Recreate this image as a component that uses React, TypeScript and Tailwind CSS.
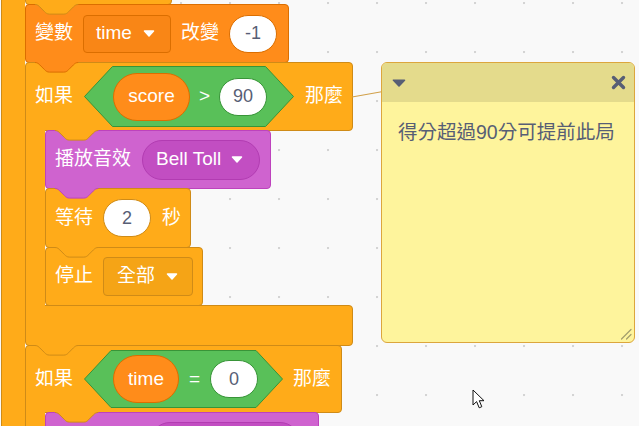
import React from 'react';

const FONT = "font-['Liberation_Sans','Noto_Sans_CJK_TC',sans-serif]";

function Bump({ fill, stroke, pos }: { fill: string; stroke: string; pos: string }) {
  return (
    <svg className={`absolute top-full z-10 ${pos}`} width="45" height="12" viewBox="0 0 45 12">
      <path
        d="M0 0 H43.2 V0.5 c-2.4 0 -3.6 1.2 -4.8 2.4 l-4.8 4.8 c-1.2 1.2 -2.4 2.4 -4.8 2.4 h-14.4 c-2.4 0 -3.6 -1.2 -4.8 -2.4 l-4.8 -4.8 C3.6 1.7 2.4 0.5 0 0.5 Z"
        fill={fill}
      />
      <path
        d="M0 0.5 c2.4 0 3.6 1.2 4.8 2.4 l4.8 4.8 c1.2 1.2 2.4 2.4 4.8 2.4 h14.4 c2.4 0 3.6 -1.2 4.8 -2.4 l4.8 -4.8 c1.2 -1.2 2.4 -2.4 4.8 -2.4"
        fill="none"
        stroke={stroke}
      />
    </svg>
  );
}

function Caret({ color = '#ffffff' }: { color?: string }) {
  return (
    <svg width="12" height="7" viewBox="0 0 12 7">
      <path d="M1.5 1 H10.5 L6 6 Z" fill={color} stroke={color} strokeWidth="1.5" strokeLinejoin="round" />
    </svg>
  );
}

function Hex({ w, h, size, inner, children }: { w: number; h: number; size: string; inner: string; children: React.ReactNode }) {
  const p = h / 2 - 2;
  const pts = `0.5,${h / 2} ${p},0.5 ${w - p},0.5 ${w - 0.5},${h / 2} ${w - p},${h - 0.5} ${p},${h - 0.5}`;
  return (
    <div className={`relative shrink-0 ${size}`}>
      <svg className="absolute inset-0" width={w} height={h}>
        <polygon points={pts} fill="#59c059" stroke="#389438" />
      </svg>
      <div className={`relative flex h-full items-center ${inner}`}>{children}</div>
    </div>
  );
}

function Oval({ value, border }: { value: string; border: string }) {
  return (
    <div className={`flex h-[38px] w-[48px] shrink-0 items-center justify-center rounded-full border bg-white text-[18px] text-[#575e75] ${border}`}>
      {value}
    </div>
  );
}

export default function App() {
  return (
    <div
      className={`relative h-[426px] w-[639px] overflow-hidden whitespace-nowrap bg-[#f9f9f9] bg-[radial-gradient(circle_at_1px_1px,#d4d4d4_1px,transparent_1.6px)] bg-[length:49px_49px] bg-[position:33px_2px] text-[19px] text-white ${FONT}`}
    >
      <div className="flex h-full items-start pl-px">
        {/* outer C arm */}
        <div className="h-full w-[24px] shrink-0 border-l border-[#cf8b17] bg-[#ffab19]" />

        <div className="flex shrink-0 flex-col">
          {/* block above, only its bottom shows */}
          <div className="relative -mt-[55px] h-[60px] w-[147px] shrink-0 rounded-[4px] border border-[#cf8b17] bg-[#ffab19]">
            <Bump fill="#ffab19" stroke="#cf8b17" pos="left-[9px]" />
          </div>

          {/* change variable */}
          <div className="relative -mt-px flex h-[59px] w-[264px] shrink-0 items-center gap-[10px] rounded-[4px] border border-[#db6e00] bg-[#ff8c1a] pl-[9px]">
            <span>變數</span>
            <div className="flex h-[38px] w-[88px] items-center gap-[11px] rounded-[4px] border border-[#db6e00] bg-[#f98616] pl-[12px]">
              <span>time</span>
              <Caret />
            </div>
            <span>改變</span>
            <Oval value="-1" border="border-[#db6e00]" />
            <Bump fill="#ff8c1a" stroke="#db6e00" pos="left-[9px]" />
          </div>

          {/* if score > 90 */}
          <div className="-mt-px flex shrink-0 flex-col">
            <div className="relative flex h-[69px] w-[328px] items-center gap-[11px] rounded-[4px] rounded-bl-none border border-[#cf8b17] bg-[#ffab19] pl-[9px]">
              <span>如果</span>
              <Hex w={210} h={61} size="h-[61px] w-[210px]" inner="gap-[9px] pl-[29px]">
                <div className="flex h-[48px] w-[77px] items-center justify-center rounded-full border border-[#db6e00] bg-[#ff8c1a]">
                  score
                </div>
                <span className="w-[11px] text-center">&gt;</span>
                <Oval value="90" border="border-[#389438]" />
              </Hex>
              <span>那麼</span>
              <Bump fill="#ffab19" stroke="#cf8b17" pos="left-[29px]" />
            </div>

            <div className="-mt-px flex">
              <div className="relative z-[1] -mb-px w-[20px] shrink-0 border-l border-[#cf8b17] bg-[#ffab19]" />
              <div className="flex flex-col">
                <div className="relative flex h-[59px] w-[226px] items-center gap-[11px] rounded-[4px] border border-[#bd42bd] bg-[#cf63cf] pl-[9px]">
                  <span>播放音效</span>
                  <div className="flex h-[40px] w-[118px] items-center gap-[10px] rounded-full border border-[#b23cb2] bg-[#c24ec2] pl-[13px]">
                    <span>Bell Toll</span>
                    <Caret />
                  </div>
                  <Bump fill="#cf63cf" stroke="#bd42bd" pos="left-[9px]" />
                </div>

                <div className="relative -mt-px flex h-[60px] w-[146px] items-center gap-[10px] rounded-[4px] border border-[#cf8b17] bg-[#ffab19] pl-[9px]">
                  <span>等待</span>
                  <Oval value="2" border="border-[#cf8b17]" />
                  <span className="ml-px">秒</span>
                  <Bump fill="#ffab19" stroke="#cf8b17" pos="left-[9px]" />
                </div>

                <div className="relative -mt-px flex h-[59px] w-[158px] items-center gap-[10px] rounded-[4px] border border-[#cf8b17] bg-[#ffab19] pl-[9px]">
                  <span>停止</span>
                  <div className="flex h-[39px] w-[90px] items-center gap-[11px] rounded-[4px] border border-[#cf8b17] bg-[#f5a416] pl-[13px]">
                    <span>全部</span>
                    <Caret />
                  </div>
                </div>
              </div>
            </div>

            <div className="relative -mt-px h-[41px] w-[328px] rounded-[4px] rounded-tl-none border border-[#cf8b17] bg-[#ffab19]">
              <Bump fill="#ffab19" stroke="#cf8b17" pos="left-[9px]" />
            </div>
          </div>

          {/* if time = 0 */}
          <div className="-mt-px flex shrink-0 flex-col">
            <div className="relative flex h-[68px] w-[317px] items-center gap-[10px] rounded-[4px] rounded-bl-none border border-[#cf8b17] bg-[#ffab19] pl-[9px]">
              <span>如果</span>
              <Hex w={199} h={58} size="ml-px h-[58px] w-[199px]" inner="gap-[10px] pl-[29px]">
                <div className="flex h-[48px] w-[66px] items-center justify-center rounded-full border border-[#db6e00] bg-[#ff8c1a]">
                  time
                </div>
                <span className="w-[11px] text-center">=</span>
                <Oval value="0" border="border-[#389438]" />
              </Hex>
              <span>那麼</span>
              <Bump fill="#ffab19" stroke="#cf8b17" pos="left-[29px]" />
            </div>
            <div className="-mt-px flex">
              <div className="relative z-[1] w-[20px] shrink-0 border-l border-[#cf8b17] bg-[#ffab19]" />
              {/* next block: only its top edge is in view */}
              <div className="relative flex h-[59px] w-[274px] items-center rounded-[4px] border border-[#bd42bd] bg-[#cf63cf] pl-[104px]">
                <div className="h-[40px] w-[150px] rounded-full border border-[#b23cb2] bg-[#c24ec2]" />
              </div>
            </div>
          </div>
        </div>
      </div>

      {/* comment connector */}
      <svg className="absolute left-[350px] top-[88px]" width="34" height="12">
        <line x1="2" y1="9" x2="33" y2="3.5" stroke="#d1a04a" strokeWidth="1.2" />
      </svg>

      {/* comment */}
      <div className="absolute left-[381px] top-[62px] flex h-[281px] w-[254px] flex-col overflow-hidden rounded-[6px] border border-[#dca63d] bg-[#fef49c]">
        <div className="flex h-[39px] shrink-0 items-center justify-between bg-[#e4db8c] pl-[10px] pr-[8px]">
          <svg width="14" height="8" viewBox="0 0 14 8">
            <path d="M1.5 1.2 H12.5 L7 7 Z" fill="#575e75" stroke="#575e75" strokeWidth="1.6" strokeLinejoin="round" />
          </svg>
          <svg width="15" height="15" viewBox="0 0 15 15">
            <path d="M2.5 2.5 L12.5 12.5 M12.5 2.5 L2.5 12.5" stroke="#575e75" strokeWidth="3.4" strokeLinecap="round" />
          </svg>
        </div>
        <p className="px-[16px] pt-[18px] text-[19.5px] leading-[24px] text-[#575e75]">得分超過90分可提前此局</p>
        <svg className="absolute bottom-[2px] right-[2px]" width="12" height="12" viewBox="0 0 12 12">
          <path d="M1.5 11 L11 1.5 M6.5 11 L11 6.5" stroke="#a39d6c" strokeWidth="1.2" strokeLinecap="round" />
        </svg>
      </div>

      {/* mouse pointer */}
      <svg className="absolute left-[472px] top-[389px]" width="14" height="21" viewBox="0 0 14 21">
        <path
          d="M1 1 L1 16 L4.6 12.6 L7.2 18.8 L9.8 17.7 L7.3 11.7 L12 11.7 Z"
          fill="#ffffff"
          stroke="#111111"
          strokeWidth="1"
          strokeLinejoin="round"
        />
      </svg>
    </div>
  );
}
